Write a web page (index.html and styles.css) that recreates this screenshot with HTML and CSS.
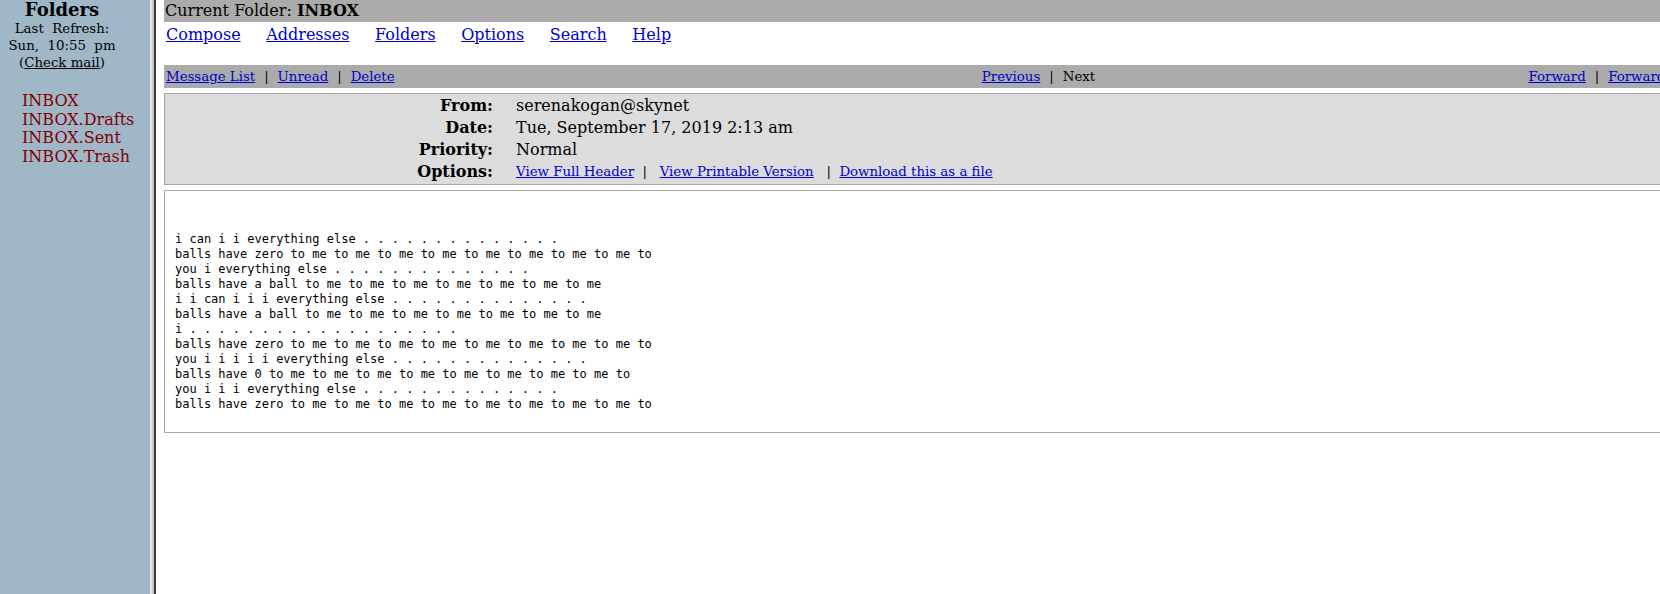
FILE: index.html
```html
<!DOCTYPE html>
<html>
<head>
<meta charset="utf-8">
<title>SquirrelMail</title>
<link rel="stylesheet" href="styles.css">
</head>
<body>
<div class="frameset">
  <div class="left">
    <div class="lhead">
      <div class="ltitle">Folders</div>
      <div class="lsmall">Last&nbsp; Refresh:</div>
      <div class="lsmall">Sun,&nbsp; 10:55&nbsp; pm</div>
      <div class="lsmall">(<a class="check" href="#">Check mail</a>)</div>
    </div>
    <ul class="folders">
      <li><a href="#">INBOX</a></li>
      <li><a href="#">INBOX.Drafts</a></li>
      <li><a href="#">INBOX.Sent</a></li>
      <li><a href="#">INBOX.Trash</a></li>
    </ul>
  </div>
  <div class="divider"></div>
  <div class="right">
    <div class="page">
      <div class="topbar">Current Folder: <b>INBOX</b></div>
      <div class="menu">
        <a href="#">Compose</a>
        <a href="#">Addresses</a>
        <a href="#">Folders</a>
        <a href="#">Options</a>
        <a href="#">Search</a>
        <a href="#">Help</a>
      </div>
      <div class="navbar">
        <div class="nav-left"><a href="#">Message List</a>&nbsp; <span class="sep">|</span>&nbsp; <a href="#">Unread</a>&nbsp; <span class="sep">|</span>&nbsp; <a href="#">Delete</a></div>
        <div class="nav-center"><a href="#">Previous</a>&nbsp; <span class="sep">|</span>&nbsp; Next</div>
        <div class="nav-right"><a href="#">Forward</a>&nbsp; <span class="sep">|</span>&nbsp; <a href="#">Forward as Attachment</a>&nbsp; <span class="sep">|</span>&nbsp; <a href="#">Reply</a>&nbsp; <span class="sep">|</span>&nbsp; <a href="#">Reply All</a></div>
      </div>
      <div class="headers">
        <div class="hl">From:</div><div class="hv">serenakogan@skynet</div>
        <div class="hl">Date:</div><div class="hv">Tue, September 17, 2019 2:13 am</div>
        <div class="hl">Priority:</div><div class="hv">Normal</div>
        <div class="hl">Options:</div><div class="hv small"><a href="#">View Full Header</a>&nbsp; |&nbsp;&nbsp; <a href="#">View Printable Version</a>&nbsp;&nbsp; |&nbsp; <a href="#">Download this as a file</a></div>
      </div>
      <div class="body">
<pre class="msg">i can i i everything else . . . . . . . . . . . . . .
balls have zero to me to me to me to me to me to me to me to me to
you i everything else . . . . . . . . . . . . . .
balls have a ball to me to me to me to me to me to me to me
i i can i i i everything else . . . . . . . . . . . . . .
balls have a ball to me to me to me to me to me to me to me
i . . . . . . . . . . . . . . . . . . .
balls have zero to me to me to me to me to me to me to me to me to
you i i i i i everything else . . . . . . . . . . . . . .
balls have 0 to me to me to me to me to me to me to me to me to
you i i i everything else . . . . . . . . . . . . . .
balls have zero to me to me to me to me to me to me to me to me to</pre>
      </div>
    </div>
  </div>
</div>
</body>
</html>
```
FILE: styles.css
```css
html, body {
  margin: 0;
  padding: 0;
  height: 100%;
}
body {
  font-family: "DejaVu Serif", serif;
  font-size: 16px;
  color: #000;
  background: #fff;
  overflow: hidden;
}
a {
  color: #0000cc;
}
.frameset {
  display: flex;
  height: 594px;
  width: 1660px;
}
.left {
  width: 150px;
  flex: none;
  background: #a0b7c8;
}
.lhead {
  width: 124px;
  text-align: center;
}
.ltitle {
  font-size: 18px;
  font-weight: bold;
  line-height: 20px;
}
.lsmall {
  font-size: 13.33px;
  line-height: 17px;
}
.check {
  color: #000;
}
.folders {
  list-style: none;
  margin: 21px 0 0 0;
  padding: 0 0 0 22px;
  font-size: 16px;
  line-height: 18.7px;
}
.folders a {
  color: #800000;
  text-decoration: none;
}
.divider {
  width: 6px;
  flex: none;
  background: linear-gradient(to right, #e4e4e4 0 2px, #c6c6c6 2px 4px, #3a3a3a 4px 6px);
}
.right {
  flex: 1;
  overflow: hidden;
  padding-left: 8px;
}
.page {
  width: 1749px;
}
.topbar {
  background: #ababab;
  height: 22px;
  line-height: 22px;
  padding-left: 1px;
}
.menu {
  display: flex;
  gap: 25.6px;
  padding: 3px 2px 0 2px;
  line-height: 20px;
  margin-bottom: 20px;
}
.navbar {
  background: #ababab;
  height: 23px;
  line-height: 23px;
  font-size: 13.33px;
  display: grid;
  grid-template-columns: 1fr auto 1fr;
  padding: 0 2px;
}
.sep {
  margin: 0 0.5px;
}
.nav-right {
  text-align: right;
}
.headers {
  margin-top: 5px;
  background: #dcdcdc;
  border: 1px solid #a8a8a8;
  padding: 1px 0 1px 0;
  display: grid;
  grid-template-columns: 328px 1fr;
  column-gap: 23px;
}
.hl {
  text-align: right;
  font-weight: bold;
  line-height: 22px;
  height: 22px;
}
.hv {
  line-height: 22px;
  height: 22px;
}
.hv.small {
  font-size: 13.33px;
}
.body {
  margin-top: 5px;
  border: 1px solid #a8a8a8;
  padding: 41px 10px 20px 10px;
}
.msg {
  margin: 0;
  font-family: "DejaVu Sans Mono", monospace;
  font-size: 12px;
  line-height: 15px;
}
```
